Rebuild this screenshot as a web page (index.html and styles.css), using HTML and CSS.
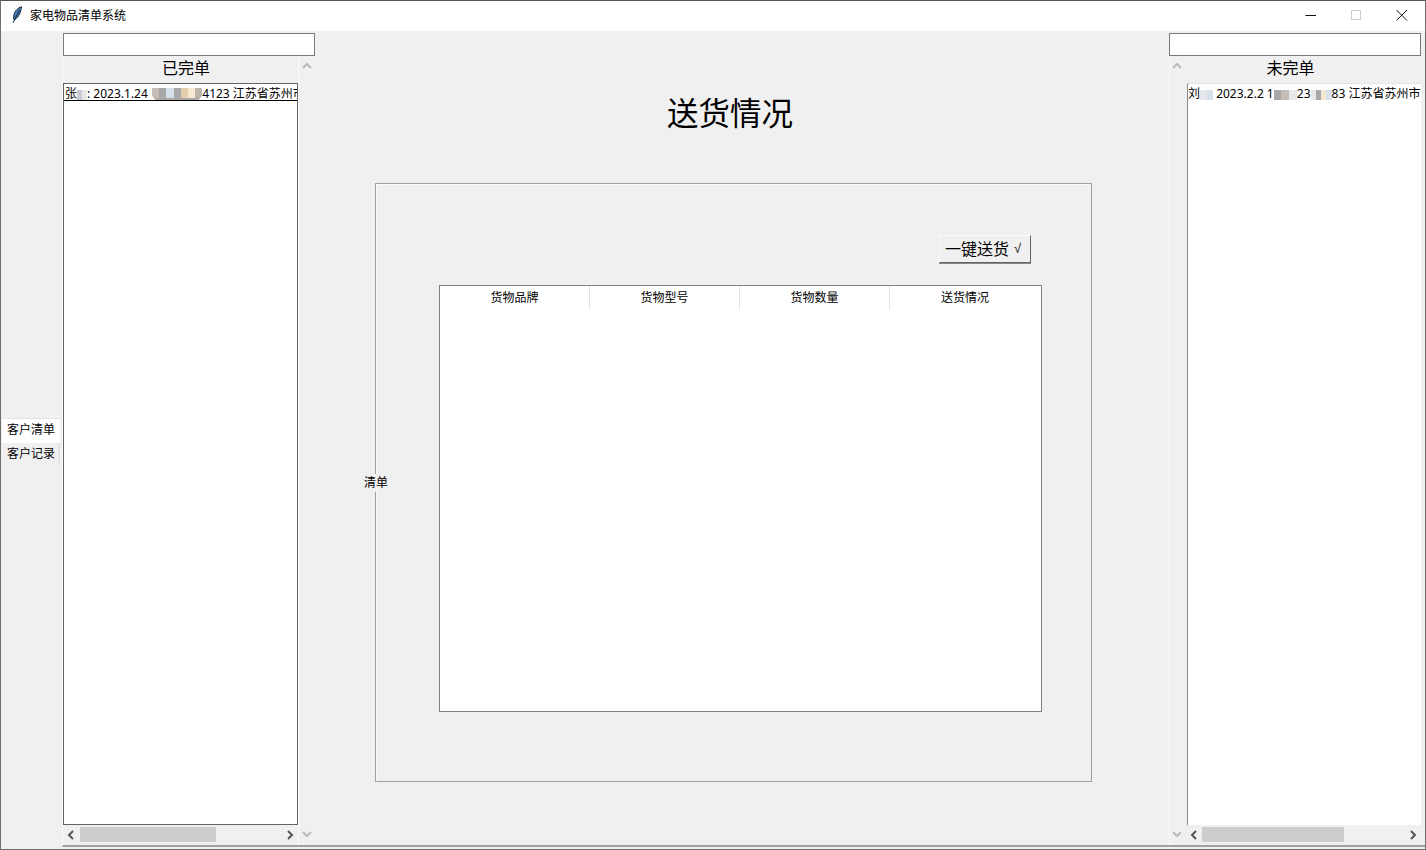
FILE: index.html
```html
<!DOCTYPE html>
<html lang="en">

<head>
    <meta charset="UTF-8">
    <title>家电物品清单系统</title>
    <link rel="stylesheet" href="styles.css">
</head>

<body>

<div class="window">
    <!-- Title bar -->
    <div class="titlebar">
        <svg class="feather" width="12" height="18" viewBox="0 0 12 18">
            <path d="M10.5 0.8C7 1.6 3.6 5 2.8 9.5C2.5 11.2 2.6 12.6 3 13.8C6.5 12.5 9.4 8.5 10.5 0.8Z" fill="#4d80b8" stroke="#10233a" stroke-width="1"/>
            <path d="M8.5 4L2 16.8" stroke="#10233a" stroke-width="1" fill="none"/>
        </svg>
        <span class="title-text">家电物品清单系统</span>
        <div class="controls">
            <svg width="46" height="30" viewBox="0 0 46 30"><path d="M18.5 14.5H29" stroke="#111" stroke-width="1"/></svg>
            <svg width="46" height="30" viewBox="0 0 46 30"><rect x="18.5" y="9.5" width="9" height="9" fill="none" stroke="#ccc"/></svg>
            <svg width="46" height="30" viewBox="0 0 46 30"><path d="M17.5 9L28 19.5M28 9L17.5 19.5" stroke="#111" stroke-width="1"/></svg>
        </div>
    </div>

    <div class="main">
        <div class="tabs">
            <div class="tab tab-active">客户清单</div>
            <div class="tab">客户记录</div>
        </div>

        <div class="content">
            <!-- Finished orders -->
            <div class="side side-left">
                <div class="entry"></div>
                <div class="side-body">
                    <div class="list-col">
                        <div class="list-title">已完单</div>
                        <div class="listbox">
                            <div class="row row-selected">张<span class="mosaic m-name"><i class="c1"></i><i class="c2"></i></span>: 2023.1.24 <span class="mosaic m-phone"><i class="c3"></i><i class="c4"></i><i class="c5"></i><i class="c4"></i><i class="c6"></i><i class="c7"></i><i class="c8"></i></span>4123 江苏省苏州市</div>
                        </div>
                        <div class="hscroll">
                            <svg class="arrow" width="16" height="16" viewBox="0 0 16 16"><path d="M10 4L6 8L10 12" fill="none" stroke="#555" stroke-width="2"/></svg>
                            <div class="track"><div class="thumb thumb-left"></div></div>
                            <svg class="arrow" width="16" height="16" viewBox="0 0 16 16"><path d="M6 4L10 8L6 12" fill="none" stroke="#555" stroke-width="2"/></svg>
                        </div>
                    </div>
                    <div class="vscroll">
                        <svg width="16" height="16" viewBox="0 0 16 16"><path d="M4 10L8 6L12 10" fill="none" stroke="#bbb" stroke-width="2"/></svg>
                        <svg width="16" height="16" viewBox="0 0 16 16"><path d="M4 6L8 10L12 6" fill="none" stroke="#bbb" stroke-width="2"/></svg>
                    </div>
                </div>
            </div>

            <!-- Delivery panel -->
            <div class="center">
                <h1 class="heading">送货情况</h1>
                <div class="frame">
                    <span class="frame-label">清单</span>
                    <div class="button-row">
                        <div class="send-button">一键送货<span class="check">√</span></div>
                    </div>
                    <div class="table">
                        <div class="table-head">
                            <div class="th">货物品牌</div>
                            <div class="th">货物型号</div>
                            <div class="th">货物数量</div>
                            <div class="th">送货情况</div>
                        </div>
                    </div>
                </div>
            </div>

            <!-- Unfinished orders -->
            <div class="side side-right">
                <div class="entry"></div>
                <div class="side-body">
                    <div class="vscroll">
                        <svg width="16" height="16" viewBox="0 0 16 16"><path d="M4 10L8 6L12 10" fill="none" stroke="#bbb" stroke-width="2"/></svg>
                        <svg width="16" height="16" viewBox="0 0 16 16"><path d="M4 6L8 10L12 6" fill="none" stroke="#bbb" stroke-width="2"/></svg>
                    </div>
                    <div class="list-col">
                        <div class="list-title">未完单</div>
                        <div class="listbox listbox-open">
                            <div class="row">刘<span class="mosaic m-name2"><i class="c2"></i><i class="c5"></i></span> 2023.2.2 1<span class="mosaic m-phone2"><i class="c4"></i><i class="c3"></i><i class="c2"></i></span>23<span class="mosaic m-phone3"><i class="c2"></i><i class="c4"></i><i class="c7"></i><i class="c5"></i></span>83 江苏省苏州市</div>
                        </div>
                        <div class="hscroll">
                            <svg class="arrow" width="16" height="16" viewBox="0 0 16 16"><path d="M10 4L6 8L10 12" fill="none" stroke="#555" stroke-width="2"/></svg>
                            <div class="track"><div class="thumb thumb-right"></div></div>
                            <svg class="arrow" width="16" height="16" viewBox="0 0 16 16"><path d="M6 4L10 8L6 12" fill="none" stroke="#555" stroke-width="2"/></svg>
                        </div>
                    </div>
                </div>
            </div>
        </div>
    </div>
</div>

</body>

</html>
```

FILE: styles.css
```css
* {
    box-sizing: border-box;
}

body {
    margin: 0;
    background-color: #f0f0f0;
    color: #000;
    font-family: "Noto Sans", "Noto Sans CJK SC", sans-serif;
    font-size: 12px;
    overflow: hidden;
}

.window {
    width: 1426px;
    height: 850px;
    display: flex;
    flex-direction: column;
    border: 1px solid #6f6f6f;
    border-top-color: #555;
    background-color: #f0f0f0;
}

.titlebar {
    height: 30px;
    flex: none;
    display: flex;
    align-items: center;
    background-color: #fff;
    padding-left: 10px;
}

.feather {
    flex: none;
    margin-bottom: 3px;
}

.title-text {
    margin-left: 7px;
    margin-bottom: 3px;
    font-size: 12px;
}

.controls {
    margin-left: auto;
    display: flex;
}

.controls svg {
    display: block;
}

.main {
    flex: 1;
    display: flex;
    min-height: 0;
}

.tabs {
    width: 61px;
    flex: none;
    display: flex;
    flex-direction: column;
    justify-content: center;
    padding: 0 0 0 1px;
}

.tab {
    height: 20px;
    width: 58px;
    display: flex;
    align-items: center;
    justify-content: center;
    border-right: 2px solid #e3e3e3;
    padding-left: 2px;
}

.tab-active {
    height: 25px;
    background-color: #fff;
    border-right: none;
    border-top: 1px solid #e3e3e3;
    padding-left: 0;
    padding-bottom: 3px;
}

.content {
    flex: 1;
    display: flex;
    min-width: 0;
    border-left: 1px solid #fafafa;
    border-bottom: 2px solid #a0a0a0;
    margin-bottom: 2px;
    background-color: #f0f0f0;
}

.side {
    flex: none;
    display: flex;
    flex-direction: column;
    padding-top: 2px;
}

.side-left {
    width: 252px;
}

.side-right {
    width: 256px;
    padding-right: 4px;
}

.entry {
    height: 23px;
    flex: none;
    background-color: #fff;
    border: 1px solid #7a7a7a;
}

.side-body {
    flex: 1;
    min-height: 0;
    display: flex;
}

.list-col {
    width: 235px;
    flex: none;
    display: flex;
    flex-direction: column;
}

.side-right .list-col {
    width: 234px;
}

.list-title {
    height: 27px;
    flex: none;
    display: flex;
    align-items: center;
    justify-content: center;
    font-size: 16px;
    padding-bottom: 5px;
    width: 246px;
}

.side-right .list-title {
    width: 243px;
    margin-left: -18px;
}

.listbox {
    flex: 1;
    min-height: 0;
    background-color: #fff;
    border: 1px solid #646464;
    overflow: hidden;
}

.listbox-open {
    border: none;
    border-left: 1px solid #8a8a8a;
    border-top: 1px solid #e3e3e3;
}

.row {
    height: 17px;
    line-height: 19px;
    white-space: nowrap;
    overflow: hidden;
    font-size: 12px;
}

.row-selected {
    border-bottom: 1px solid #000;
    padding-left: 1px;
}

.mosaic {
    display: inline-flex;
    vertical-align: middle;
}

.mosaic i {
    display: block;
    width: 7.2px;
    height: 10px;
}

.m-name i {
    width: 5px;
}

.m-name2 i {
    width: 6.5px;
}

.m-phone {
    margin-left: 1px;
    padding-bottom: 3px;
    background-color: #aaa7a4;
    border-radius: 0 0 8px 8px;
    overflow: hidden;
}

.m-phone2 i {
    width: 7.7px;
}

.m-phone3 i {
    width: 5.25px;
}

.c1 { background-color: #c9cdd0; }
.c2 { background-color: #e6e8ec; }
.c3 { background-color: #c6bcb6; }
.c4 { background-color: #a7a9a8; }
.c5 { background-color: #d5e2ec; }
.c6 { background-color: #e3cfae; }
.c7 { background-color: #f5e9d2; }
.c8 { background-color: #bdb4ac; }

.hscroll {
    height: 20px;
    flex: none;
    display: flex;
    align-items: flex-start;
    padding-top: 2px;
}

.side-right .hscroll {
    margin-left: -1px;
}

.arrow {
    flex: none;
}

.track {
    flex: 1;
    height: 15px;
}

.thumb {
    height: 15px;
    background-color: #cdcdcd;
}

.thumb-left {
    width: 136px;
    margin-left: 1px;
}

.thumb-right {
    width: 142px;
}

.vscroll {
    width: 17px;
    flex: none;
    display: flex;
    flex-direction: column;
    justify-content: space-between;
    padding: 2px 0 3px 0;
    border-left: 1px solid #fafafa;
}

.side-right .vscroll {
    width: 18px;
}

.side-right .vscroll svg {
    margin-left: -1px;
}

.center {
    flex: 1;
    min-width: 0;
    padding-left: 60px;
    display: flex;
    flex-direction: column;
}

.heading {
    margin: 0;
    height: 152px;
    padding-top: 59px;
    padding-left: 292px;
    font-size: 31.5px;
    font-weight: normal;
    line-height: 46px;
    white-space: nowrap;
}

.frame {
    position: relative;
    width: 717px;
    height: 599px;
    border: 1px solid #a0a0a0;
    box-shadow: inset 1px 1px 0 #fafafa;
    padding: 51px 49px 0 63px;
}

.frame-label {
    position: absolute;
    left: -13px;
    top: 290px;
    padding: 0 1px;
    background-color: #f0f0f0;
    line-height: 18px;
}

.button-row {
    display: flex;
    justify-content: flex-end;
    padding-right: 11px;
    height: 50px;
}

.send-button {
    width: 92px;
    height: 28px;
    display: flex;
    align-items: center;
    justify-content: flex-start;
    padding: 0 0 2px 5px;
    font-size: 16px;
    background-color: #f0f0f0;
    border: 1px solid;
    border-color: #fafafa #646464 #646464 #fafafa;
    box-shadow: 0 1px 0 #888;
    white-space: nowrap;
}

.check {
    margin-left: 5px;
    font-family: "Liberation Sans", sans-serif;
    font-size: 13px;
}

.table {
    width: 603px;
    height: 427px;
    background-color: #fff;
    border: 1px solid #828282;
}

.table-head {
    display: flex;
    height: 24px;
}

.th {
    width: 150px;
    display: flex;
    align-items: center;
    justify-content: center;
    border-right: 1px solid #e3e3e3;
    padding-bottom: 3px;
}

.th:last-child {
    border-right: none;
}
```
